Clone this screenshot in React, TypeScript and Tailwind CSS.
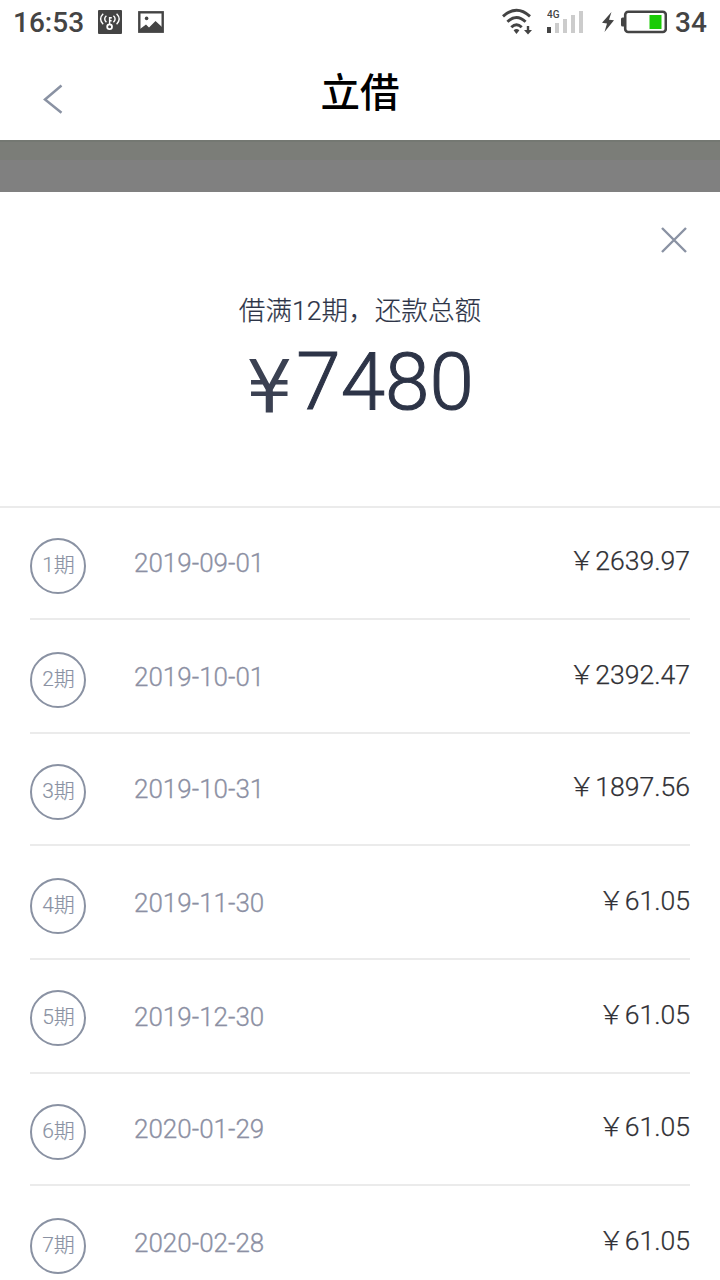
type Installment = { term: number; date: string; amount: string; row: string; circle: string; text: string };

const installments: Installment[] = [
  { term: 1, date: '2019-09-01', amount: '2639.97', row: 'h-[112px]', circle: 'mt-[30px]', text: 'mt-[35px]' },
  { term: 2, date: '2019-10-01', amount: '2392.47', row: 'h-[114px]', circle: 'mt-[32px]', text: 'mt-[37px]' },
  { term: 3, date: '2019-10-31', amount: '1897.56', row: 'h-[112px]', circle: 'mt-[30px]', text: 'mt-[35px]' },
  { term: 4, date: '2019-11-30', amount: '61.05', row: 'h-[114px]', circle: 'mt-[32px]', text: 'mt-[37px]' },
  { term: 5, date: '2019-12-30', amount: '61.05', row: 'h-[114px]', circle: 'mt-[30px]', text: 'mt-[37px]' },
  { term: 6, date: '2020-01-29', amount: '61.05', row: 'h-[112px]', circle: 'mt-[30px]', text: 'mt-[35px]' },
  { term: 7, date: '2020-02-28', amount: '61.05', row: 'h-[114px]', circle: 'mt-[32px]', text: 'mt-[37px]' },
];

function HotspotIcon() {
  return (
    <svg className="ml-[14px] mt-[10px] h-6 w-6" viewBox="0 0 24 24" fill="none" stroke="#fff" strokeWidth="1.4">
      <rect width="24" height="24" rx="1" fill="#444" stroke="none" />
      <circle cx="11.6" cy="16.7" r="2.4" strokeWidth="1.8" />
      <path d="M11.600 14.300V7M11.600 7.700h2.200M11.600 10.700h2" />
      <path d="M8.400 5.800Q5 9 8.400 12.200M5.200 3.800Q0 9 5.200 14.200" />
      <path d="M15.400 5.800Q18.800 9 15.400 12.200M18.600 3.800Q23.800 9 18.600 14.200" />
    </svg>
  );
}

function PictureIcon() {
  return (
    <svg className="ml-4 mt-[11px] h-[22px] w-[26px]" viewBox="0 0 26 22">
      <rect x="1.3" y="1.3" width="23.4" height="19.4" fill="#fff" stroke="#444" strokeWidth="2.4" />
      <path d="M2 18 8 13.500 11 16.500 17.5 10 24 16v5H2z" fill="#444" />
      <circle cx="8.6" cy="7.4" r="1.8" fill="#444" />
    </svg>
  );
}

function StatusBar() {
  return (
    <div className="flex h-11 shrink-0 items-start text-[#444]">
      <span className="ml-[13px] mt-[7px] w-[71px] text-[28px] font-medium leading-8">16:53</span>
      <HotspotIcon />
      <PictureIcon />
      <svg className="ml-[338px] mt-2 h-[27px] w-[32px]" viewBox="0 0 32 27" fill="none" stroke="#444" strokeWidth="2.9">
        <path d="M1 8.3Q14.500-3.800 28 8.300" />
        <path d="M5.4 13.8Q14.500 5.300 23.600 13.800" />
        <path d="M9.3 19.3Q14.500 14.300 19.700 19.300" />
        <path d="M11.6 22.2Q14.500 19.700 17.400 22.200L14.500 26z" fill="#444" stroke="none" />
        <path d="M24.800 18h2.400v4H30l-4 4.500L22 22h2.800z" fill="#444" stroke="none" />
      </svg>
      <svg className="ml-[13px] mt-2 h-[27px] w-[37px]" viewBox="0 0 37 27">
        <text x="0" y="10" fontFamily="Roboto, sans-serif" fontSize="10" fontWeight="500" textLength="12.500" fill="#444">4G</text>
        <rect x="0" y="19" width="4" height="6" fill="#444" />
        <path d="M8 15h4v10H8zM16 11h4v14h-4zM24 7h4v18h-4zM32 3h4v22h-4z" fill="#ccc" />
      </svg>
      <svg className="ml-[18px] mt-[12px] h-[20px] w-[12px]" viewBox="0 0 12 20">
        <path d="M9.5 0 0 10.8 5 11.5 2.5 20 12 8.2 7 7.7z" fill="#444" />
      </svg>
      <svg className="ml-[7px] mt-[10px] h-[24px] w-[46px]" viewBox="0 0 46 24">
        <rect x="0" y="7.5" width="5" height="9" rx="1.5" fill="#444" />
        <rect x="4.2" y="1.7" width="40.6" height="20.3" rx="3" fill="#fff" stroke="#444" strokeWidth="2.6" />
        <rect x="28.5" y="5" width="12" height="14" fill="#1acb05" />
      </svg>
      <span className="ml-[8px] mt-[7px] text-[28px] font-medium leading-8">34</span>
    </div>
  );
}

export default function App() {
  return (
    <div className="flex h-[1280px] w-[720px] flex-col overflow-hidden bg-white font-['Roboto','Noto_Sans_CJK_SC',sans-serif] font-light">
      <StatusBar />
      <header className="flex h-24 shrink-0 items-start">
        <svg className="ml-[43px] mt-[40px] h-[30px] w-5" viewBox="0 0 20 30" fill="none" stroke="#8a92a3" strokeWidth="2.5">
          <path d="M18.5 1.5 2 15.5l16.500 13.300" />
        </svg>
        <h1 className="mr-[63px] mt-[18px] flex-1 text-center font-['Noto_Sans_CJK_SC',sans-serif] text-[39.5px] font-medium leading-[56px] text-black">立借</h1>
      </header>
      <div className="h-5 shrink-0 border-t-2 border-[#747872] bg-[#7b7d78]" />
      <div className="h-8 shrink-0 bg-[#808080]" />
      <section className="flex h-[316px] shrink-0 flex-col border-b-2 border-[#ebebeb] text-center text-[#2d3447]">
        <button className="mr-[32px] mt-[34px] self-end" aria-label="关闭">
          <svg className="h-7 w-7" viewBox="0 0 28 28" fill="none" stroke="#8a92a3" strokeWidth="2.4">
            <path d="M2 2 26 26M26 2 2 26" />
          </svg>
        </button>
        <p className="mt-[37px] text-[26.6px] leading-10 [-webkit-text-stroke:0.2px]">借满12期，还款总额</p>
        <p className="mt-[3px] flex items-start justify-center leading-[96px]">
          <span className="mr-[4px] mt-[5px] font-['DejaVu_Sans',sans-serif] text-[72.5px] font-normal leading-[96px] text-[#3b4152]">¥</span>
          <span className="text-[80px] leading-[96px] [-webkit-text-stroke:1px]">7480</span>
        </p>
      </section>
      <ul className="flex flex-col px-[30px]">
        {installments.map((item) => (
          <li key={item.term} className={`${item.row} flex shrink-0 items-start border-b-2 border-[#ebebeb]`}>
            <span className={`${item.circle} flex h-14 w-14 items-center justify-center rounded-full border-2 border-[#8a92a3] pb-[3px] pl-px text-[21px] leading-7 text-[#8a92a3] [-webkit-text-stroke:0.15px]`}>
              {item.term}期
            </span>
            <span className={`${item.text} ml-12 text-[26px] leading-10 text-[#8c90a3] [-webkit-text-stroke:0.3px]`}>{item.date}</span>
            <span className={`${item.text} ml-auto text-[26.6px] leading-9 text-[#303035] [-webkit-text-stroke:0.25px]`}>￥{item.amount}</span>
          </li>
        ))}
      </ul>
    </div>
  );
}
